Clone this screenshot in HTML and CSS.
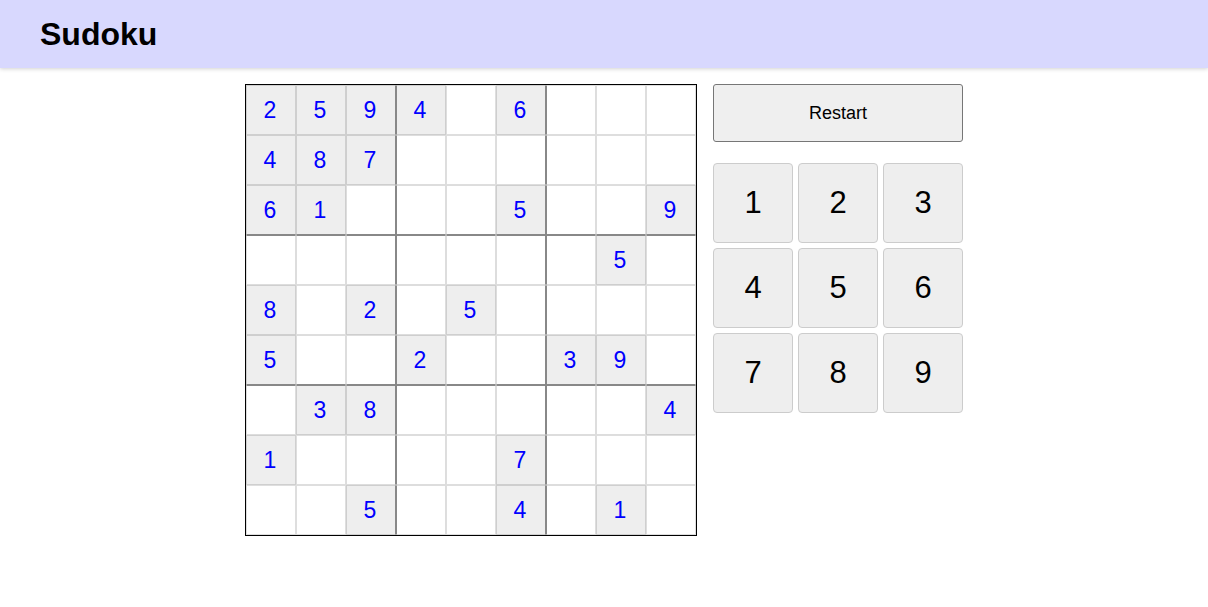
FILE: index.html
```html
<!DOCTYPE html>
<html>
<head>
<meta charset="utf-8">
<link rel="stylesheet" href="styles.css">
</head>
<body>
<header class="topbar"><h1 class="title">Sudoku</h1></header>
<main class="game">
  <div class="board">
    <div class="cell given">2</div><div class="cell given">5</div><div class="cell given bx">9</div><div class="cell given bl">4</div><div class="cell"></div><div class="cell given bx">6</div><div class="cell bl"></div><div class="cell"></div><div class="cell"></div>
    <div class="cell given">4</div><div class="cell given">8</div><div class="cell given bx">7</div><div class="cell bl"></div><div class="cell"></div><div class="cell bx"></div><div class="cell bl"></div><div class="cell"></div><div class="cell"></div>
    <div class="cell given by">6</div><div class="cell given by">1</div><div class="cell by bx"></div><div class="cell by bl"></div><div class="cell by"></div><div class="cell given by bx">5</div><div class="cell by bl"></div><div class="cell by"></div><div class="cell given by">9</div>
    <div class="cell bt"></div><div class="cell bt"></div><div class="cell bt bx"></div><div class="cell bt bl"></div><div class="cell bt"></div><div class="cell bt bx"></div><div class="cell bt bl"></div><div class="cell given bt">5</div><div class="cell bt"></div>
    <div class="cell given">8</div><div class="cell"></div><div class="cell given bx">2</div><div class="cell bl"></div><div class="cell given">5</div><div class="cell bx"></div><div class="cell bl"></div><div class="cell"></div><div class="cell"></div>
    <div class="cell given by">5</div><div class="cell by"></div><div class="cell by bx"></div><div class="cell given by bl">2</div><div class="cell by"></div><div class="cell by bx"></div><div class="cell given by bl">3</div><div class="cell given by">9</div><div class="cell by"></div>
    <div class="cell bt"></div><div class="cell given bt">3</div><div class="cell given bt bx">8</div><div class="cell bt bl"></div><div class="cell bt"></div><div class="cell bt bx"></div><div class="cell bt bl"></div><div class="cell bt"></div><div class="cell given bt">4</div>
    <div class="cell given">1</div><div class="cell"></div><div class="cell bx"></div><div class="cell bl"></div><div class="cell"></div><div class="cell given bx">7</div><div class="cell bl"></div><div class="cell"></div><div class="cell"></div>
    <div class="cell"></div><div class="cell"></div><div class="cell given bx">5</div><div class="cell bl"></div><div class="cell"></div><div class="cell given bx">4</div><div class="cell bl"></div><div class="cell given">1</div><div class="cell"></div>
  </div>
  <div class="controls">
    <button class="restart">Restart</button>
    <div class="numpad">
      <button class="num">1</button><button class="num">2</button><button class="num">3</button>
      <button class="num">4</button><button class="num">5</button><button class="num">6</button>
      <button class="num">7</button><button class="num">8</button><button class="num">9</button>
    </div>
  </div>
</main>
</body>
</html>
```

FILE: styles.css
```css
* { box-sizing: border-box; }
body {
  margin: 0;
  font-family: "Liberation Sans", Arial, sans-serif;
  background: #fff;
}
.topbar {
  height: 68px;
  background: #d8d8fe;
  display: flex;
  align-items: center;
  padding: 0 40px;
  box-shadow: 0 1px 4px rgba(0,0,0,0.18);
}
.title {
  margin: 0;
  font-size: 32px;
  font-weight: bold;
  color: #000;
}
.game {
  display: flex;
  justify-content: center;
  gap: 16px;
  margin-top: 16px;
}
.board {
  display: grid;
  grid-template-columns: repeat(9, 50px);
  grid-auto-rows: 50px;
  border: 1px solid #000;
  width: 452px;
  height: 452px;
}
.cell {
  border: 1px solid rgba(0,0,0,0.13);
  display: flex;
  align-items: center;
  justify-content: center;
  padding-right: 2px;
  font-size: 23px;
  color: #0000ff;
  background: #fff;
}
.cell.given { background: #eeeeee; }
.cell.bx { border-right-color: #888; }
.cell.bl { border-left-color: #888; }
.cell.by { border-bottom-color: #888; }
.cell.bt { border-top-color: #888; }
.controls {
  width: 250px;
  display: flex;
  flex-direction: column;
}
.restart {
  height: 58px;
  width: 250px;
  background: #efefef;
  border: 1px solid #767676;
  border-radius: 3px;
  font-family: "Liberation Sans", Arial, sans-serif;
  font-size: 18px;
  color: #000;
}
.numpad {
  margin-top: 21px;
  display: grid;
  grid-template-columns: repeat(3, 80px);
  grid-auto-rows: 80px;
  gap: 5px;
}
.num {
  background: #eeeeee;
  border: 1px solid #cccccc;
  border-radius: 4px;
  font-family: "Liberation Sans", Arial, sans-serif;
  font-size: 31px;
  color: #000;
  padding: 0;
}
```
